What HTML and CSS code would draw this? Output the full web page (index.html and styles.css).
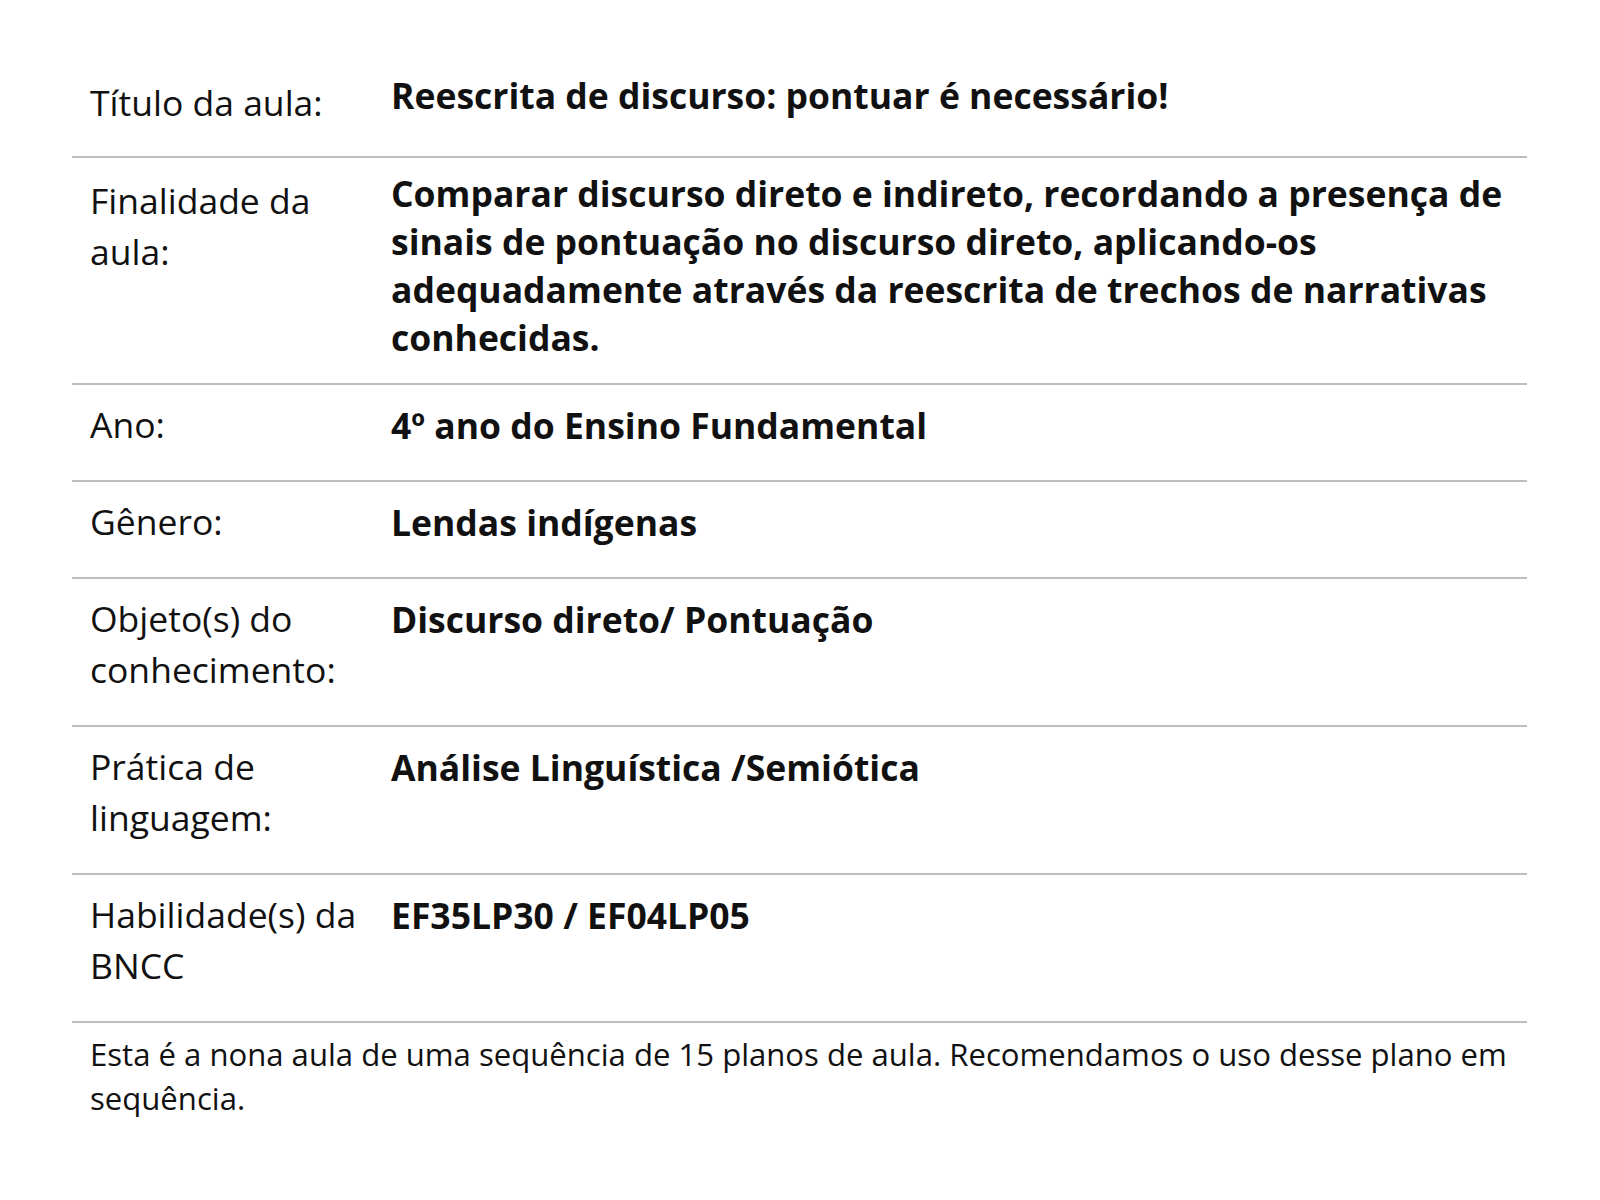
FILE: index.html
```html
<!DOCTYPE html>
<html lang="pt-BR">
<head>
<meta charset="utf-8">
<title>Plano de aula</title>
<link rel="stylesheet" href="styles.css">
</head>
<body>
<main class="plan">
  <div class="row lead">
    <div class="label">Título da aula:</div>
    <div class="value">Reescrita de discurso: pontuar é necessário!</div>
  </div>
  <div class="row lead">
    <div class="label">Finalidade da aula:</div>
    <div class="value">Comparar discurso direto e indireto, recordando a presença de sinais de pontuação no discurso direto, aplicando-os adequadamente através da reescrita de trechos de narrativas conhecidas.</div>
  </div>
  <div class="row">
    <div class="label">Ano:</div>
    <div class="value">4º ano do Ensino Fundamental</div>
  </div>
  <div class="row">
    <div class="label">Gênero:</div>
    <div class="value">Lendas indígenas</div>
  </div>
  <div class="row">
    <div class="label">Objeto(s) do conhecimento:</div>
    <div class="value">Discurso direto/ Pontuação</div>
  </div>
  <div class="row">
    <div class="label">Prática de linguagem:</div>
    <div class="value">Análise Linguística /Semiótica</div>
  </div>
  <div class="row">
    <div class="label">Habilidade(s) da BNCC</div>
    <div class="value">EF35LP30 / EF04LP05</div>
  </div>
  <p class="note">Esta é a nona aula de uma sequência de 15 planos de aula. Recomendamos o uso desse plano em sequência.</p>
</main>
</body>
</html>
```

FILE: styles.css
```css
html, body {
  margin: 0;
  padding: 0;
  background: #ffffff;
}

body {
  font-family: "Open Sans", "Noto Sans", sans-serif;
  color: #111111;
}

.plan {
  margin: 60px 73px 0 72px;
}

.row {
  display: grid;
  grid-template-columns: 319px 1fr;
  border-bottom: 2px solid #bdbdbd;
}

.label {
  font-size: 35.5px;
  line-height: 51px;
  font-weight: 400;
  padding: 14px 21px 30px 18px;
}

.value {
  font-size: 35.5px;
  line-height: 48px;
  font-weight: 700;
  padding: 16px 18px 12px 0;
}

.lead .label {
  padding-top: 17px;
  padding-bottom: 28px;
}

.lead .value {
  padding-top: 11px;
  padding-bottom: 22px;
}

.note {
  margin: 0;
  padding: 9px 10px 0 18px;
  font-size: 31.1px;
  line-height: 44px;
}
```
